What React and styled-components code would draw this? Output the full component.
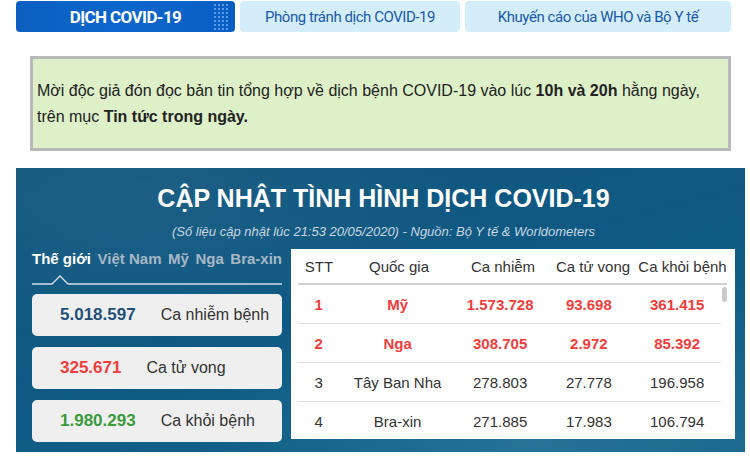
import React from 'react';
import styled, { createGlobalStyle } from 'styled-components';

const GlobalStyle = createGlobalStyle`
  body {
    margin: 0;
    background: #fff;
    font-family: "Liberation Sans", Arial, sans-serif;
  }
`;

const Page = styled.div`
  width: 750px;
  padding: 1px 0 0 16px;
  box-sizing: border-box;
`;

const TopNav = styled.nav`
  display: flex;
  gap: 5px;
  width: 715px;
  height: 31px;
`;

const NavTab = styled.a`
  position: relative;
  overflow: hidden;
  flex: ${(p) => p.$grow};
  display: flex;
  align-items: center;
  justify-content: center;
  border-radius: 4px;
  font-family: Roboto, "Liberation Sans", sans-serif;
  font-size: ${(p) => (p.$active ? '17px' : '15px')};
  font-weight: ${(p) => (p.$active ? 700 : 400)};
  letter-spacing: ${(p) => (p.$active ? '-0.6px' : '-0.45px')};
  color: ${(p) => (p.$active ? '#fff' : '#1b5aa6')};
  background: ${(p) =>
    p.$active
      ? 'linear-gradient(90deg, #0b5fbf 0%, #0d66cc 45%, #0a5ec2 100%)'
      : '#d3edfb'};

  &::after {
    content: '';
    display: ${(p) => (p.$active ? 'block' : 'none')};
    position: absolute;
    right: 6px;
    top: 2px;
    width: 16px;
    height: 27px;
    background-image: radial-gradient(circle, rgba(120, 180, 255, 0.7) 0.8px, transparent 1.2px);
    background-size: 4px 4px;
  }
`;

const Notice = styled.div`
  margin: 24px 0 0 14px;
  width: 701px;
  box-sizing: border-box;
  border: 3px solid #b9b9b9;
  background: #def0c8;
  padding: 19px 4px 18px;
  font-size: 16px;
  line-height: 26px;
  color: #222;
`;

const Panel = styled.section`
  margin-top: 17px;
  width: 729px;
  height: 284px;
  box-sizing: border-box;
  padding: 15px 10px 0 16px;
  background:
    radial-gradient(ellipse at 15% 10%, rgba(255, 255, 255, 0.05), transparent 40%),
    radial-gradient(ellipse at 70% 95%, rgba(120, 190, 220, 0.18), transparent 45%),
    linear-gradient(165deg, #12557c 0%, #0e5a84 50%, #176589 100%);
`;

const Title = styled.h1`
  margin: 0;
  text-align: center;
  font-size: 25px;
  line-height: 30px;
  font-weight: 700;
  color: #fff;
`;

const Subtitle = styled.p`
  margin: 10px 0 0;
  text-align: center;
  font-size: 13px;
  line-height: 18px;
  font-style: italic;
  color: #c9d7e3;
`;

const Body = styled.div`
  margin-top: 8px;
  display: flex;
  gap: 9px;
`;

const LeftCol = styled.div`
  width: 250px;
  flex: none;
`;

const RegionTabs = styled.div`
  display: flex;
  justify-content: space-between;
  height: 20px;
  line-height: 20px;
`;

const RegionTab = styled.span`
  font-size: 15px;
  font-weight: 700;
  color: ${(p) => (p.$active ? '#fff' : '#a8b8c6')};
`;

const Underline = styled.svg`
  display: block;
  margin-top: 6px;
`;

const Cards = styled.div`
  margin-top: 9px;
  display: flex;
  flex-direction: column;
  gap: 11px;
`;

const StatCard = styled.div`
  height: 42px;
  display: flex;
  align-items: center;
  gap: 25px;
  padding-left: 28px;
  border-radius: 5px;
  background: #efefef;
`;

const StatNumber = styled.span`
  font-size: 17px;
  font-weight: 700;
  color: ${(p) => p.$color};
`;

const StatLabel = styled.span`
  font-size: 16px;
  color: #333;
`;

const TableBox = styled.div`
  width: 444px;
  height: 190px;
  background: #fff;
  padding: 0 8px 0 7px;
  box-sizing: border-box;
  overflow: hidden;
`;

const cols = '42fr 118fr 90fr 90fr 89fr';

const HeadRow = styled.div`
  display: grid;
  grid-template-columns: ${cols};
  height: 34px;
  align-items: center;
  border-bottom: 2px solid #cfcfcf;
  font-size: 15px;
  color: #333;
  text-align: center;
`;

const RowsWrap = styled.div`
  position: relative;
  height: 154px;
  overflow: hidden;
  padding-right: 6px;
`;

const ScrollThumb = styled.div`
  position: absolute;
  right: 0;
  top: 2px;
  width: 5px;
  height: 15px;
  border-radius: 3px;
  background: #c9c9c9;
`;

const Row = styled.div`
  display: grid;
  grid-template-columns: ${cols};
  height: 38px;
  align-items: center;
  border-bottom: 1px solid #e0e0e0;
  font-size: 15px;
  text-align: center;
  font-weight: ${(p) => (p.$hot ? 700 : 400)};
  color: ${(p) => (p.$hot ? '#f23d3d' : '#333')};
`;

const rows = [
  ['1', 'Mỹ', '1.573.728', '93.698', '361.415', true],
  ['2', 'Nga', '308.705', '2.972', '85.392', true],
  ['3', 'Tây Ban Nha', '278.803', '27.778', '196.958', false],
  ['4', 'Bra-xin', '271.885', '17.983', '106.794', false],
];

const stats = [
  ['5.018.597', 'Ca nhiễm bệnh', '#1f4f78'],
  ['325.671', 'Ca tử vong', '#f23d3d'],
  ['1.980.293', 'Ca khỏi bệnh', '#3a9a3c'],
];

export default function App() {
  return (
    <>
      <GlobalStyle />
      <Page>
        <TopNav>
          <NavTab $active $grow="219">DỊCH COVID-19</NavTab>
          <NavTab $grow="220">Phòng tránh dịch COVID-19</NavTab>
          <NavTab $grow="266">Khuyến cáo của WHO và Bộ Y tế</NavTab>
        </TopNav>

        <Notice>
          Mời độc giả đón đọc bản tin tổng hợp về dịch bệnh COVID-19 vào lúc <b>10h và 20h</b> hằng ngày,
          <br />
          trên mục <b>Tin tức trong ngày.</b>
        </Notice>

        <Panel>
          <Title>CẬP NHẬT TÌNH HÌNH DỊCH COVID-19</Title>
          <Subtitle>(Số liệu cập nhật lúc 21:53 20/05/2020) - Nguồn: Bộ Y tế &amp; Worldometers</Subtitle>
          <Body>
            <LeftCol>
              <RegionTabs>
                <RegionTab $active>Thế giới</RegionTab>
                <RegionTab>Việt Nam</RegionTab>
                <RegionTab>Mỹ</RegionTab>
                <RegionTab>Nga</RegionTab>
                <RegionTab>Bra-xin</RegionTab>
              </RegionTabs>
              <Underline width="250" height="10" viewBox="0 0 250 10">
                <polyline
                  points="0,9 20,9 28,1 36,9 250,9"
                  fill="none"
                  stroke="#d5dee6"
                  strokeWidth="1.3"
                />
              </Underline>
              <Cards>
                {stats.map(([n, label, c]) => (
                  <StatCard key={label}>
                    <StatNumber $color={c}>{n}</StatNumber>
                    <StatLabel>{label}</StatLabel>
                  </StatCard>
                ))}
              </Cards>
            </LeftCol>

            <TableBox>
              <HeadRow>
                <span>STT</span>
                <span>Quốc gia</span>
                <span>Ca nhiễm</span>
                <span>Ca tử vong</span>
                <span>Ca khỏi bệnh</span>
              </HeadRow>
              <RowsWrap>
                {rows.map(([stt, name, a, b, c, hot]) => (
                  <Row key={stt} $hot={hot}>
                    <span>{stt}</span>
                    <span>{name}</span>
                    <span>{a}</span>
                    <span>{b}</span>
                    <span>{c}</span>
                  </Row>
                ))}
                <ScrollThumb />
              </RowsWrap>
            </TableBox>
          </Body>
        </Panel>
      </Page>
    </>
  );
}
